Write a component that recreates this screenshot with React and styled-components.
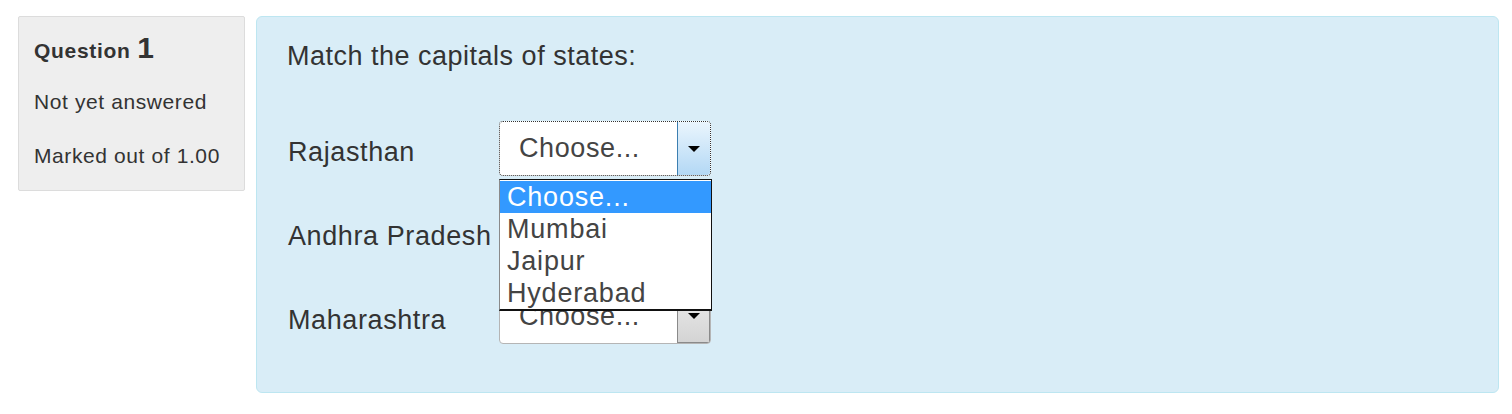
import styled, { createGlobalStyle } from "styled-components";

const GlobalStyle = createGlobalStyle`
  body {
    margin: 0;
    background: #ffffff;
    font-family: "Liberation Sans", Arial, sans-serif;
    color: #333333;
  }
`;

const Page = styled.div`
  display: flex;
  align-items: flex-start;
  gap: 11px;
  padding: 16px 13px 0 18px;
`;

const InfoBox = styled.div`
  box-sizing: border-box;
  width: 227px;
  height: 175px;
  padding: 16px 10px 0 15px;
  background: #eeeeee;
  border: 1px solid #dcdcdc;
  border-radius: 2px;
`;

const QuestionTitle = styled.h3`
  margin: 0;
  font-size: 21px;
  font-weight: bold;
  line-height: 30px;
  letter-spacing: 0.7px;
  color: #333;
`;

const QuestionNo = styled.span`
  font-size: 30px;
`;

const InfoLine = styled.div`
  margin-top: ${(p) => p.$top}px;
  font-size: 21px;
  line-height: 24px;
  letter-spacing: 0.6px;
  color: #333;
`;

const Content = styled.div`
  box-sizing: border-box;
  flex: 1;
  height: 377px;
  padding: 23px 30px 0 30px;
  background: #d9edf7;
  border: 1px solid #bde6f1;
  border-radius: 6px;
`;

const Prompt = styled.p`
  margin: 0 0 49px 0;
  font-size: 27px;
  line-height: 32px;
  letter-spacing: 0.5px;
`;

const Rows = styled.div`
  display: flex;
  flex-direction: column;
  gap: 29px;
`;

const Row = styled.div`
  display: grid;
  grid-template-columns: 212px 212px;
  align-items: center;
  height: 55px;
`;

const Label = styled.span`
  font-size: 27px;
  padding-top: 8px;
  padding-left: 1px;
  letter-spacing: 0.6px;
`;

const SelectWrap = styled.div`
  position: relative;
  height: 55px;
`;

const SelectBox = styled.div`
  box-sizing: border-box;
  display: flex;
  height: 100%;
  background: #ffffff;
  border: 1px ${(p) => (p.$focused ? "dotted #333" : "solid #b5b5b5")};
  border-radius: 4px;
  overflow: hidden;
`;

const SelectText = styled.span`
  flex: 1;
  display: flex;
  align-items: center;
  padding-left: 19px;
  font-size: 27px;
  letter-spacing: 0.6px;
  color: #444;
`;

const Arrow = styled.span`
  box-sizing: border-box;
  width: 33px;
  display: flex;
  justify-content: center;
  align-items: center;
  border-left: 1px solid ${(p) => (p.$focused ? "#3c7fb1" : "#8a8a8a")};
  background: ${(p) =>
    p.$focused
      ? "linear-gradient(#eaf5fd, #b3d8f5)"
      : "linear-gradient(#ececec, #d4d4d4)"};
  ${(p) =>
    p.$focused
      ? ""
      : "border-right: 1px solid #8a8a8a; border-bottom: 1px solid #8a8a8a;"}
`;

const Triangle = styled.span`
  width: 0;
  height: 0;
  border-left: 6px solid transparent;
  border-right: 6px solid transparent;
  border-top: 6px solid #000;
`;

const DropList = styled.ul`
  position: absolute;
  top: 58px;
  left: 0;
  z-index: 5;
  box-sizing: border-box;
  width: 213px;
  margin: 0;
  padding: 1px 0 0 0;
  list-style: none;
  background: #ffffff;
  border: 1px solid #111;
  border-left-color: #8a8a8a;
  border-bottom-width: 2px;
`;

const Option = styled.li`
  height: 32px;
  line-height: 32px;
  padding-left: 7px;
  font-size: 27px;
  letter-spacing: 0.8px;
  color: ${(p) => (p.$active ? "#ffffff" : "#444")};
  background: ${(p) => (p.$active ? "#3399ff" : "transparent")};
`;

const options = ["Choose...", "Mumbai", "Jaipur", "Hyderabad"];
const states = ["Rajasthan", "Andhra Pradesh", "Maharashtra"];

function Select({ focused, open }) {
  return (
    <SelectWrap>
      <SelectBox $focused={focused}>
        <SelectText>Choose...</SelectText>
        <Arrow $focused={focused}>
          <Triangle />
        </Arrow>
      </SelectBox>
      {open && (
        <DropList>
          {options.map((o, i) => (
            <Option key={o} $active={i === 0}>
              {o}
            </Option>
          ))}
        </DropList>
      )}
    </SelectWrap>
  );
}

export default function App() {
  return (
    <>
      <GlobalStyle />
      <Page>
        <InfoBox>
          <QuestionTitle>
            Question <QuestionNo>1</QuestionNo>
          </QuestionTitle>
          <InfoLine $top={24}>Not yet answered</InfoLine>
          <InfoLine $top={30}>Marked out of 1.00</InfoLine>
        </InfoBox>
        <Content>
          <Prompt>Match the capitals of states:</Prompt>
          <Rows>
            {states.map((s, i) => (
              <Row key={s}>
                <Label>{s}</Label>
                <Select focused={i === 0} open={i === 0} />
              </Row>
            ))}
          </Rows>
        </Content>
      </Page>
    </>
  );
}
